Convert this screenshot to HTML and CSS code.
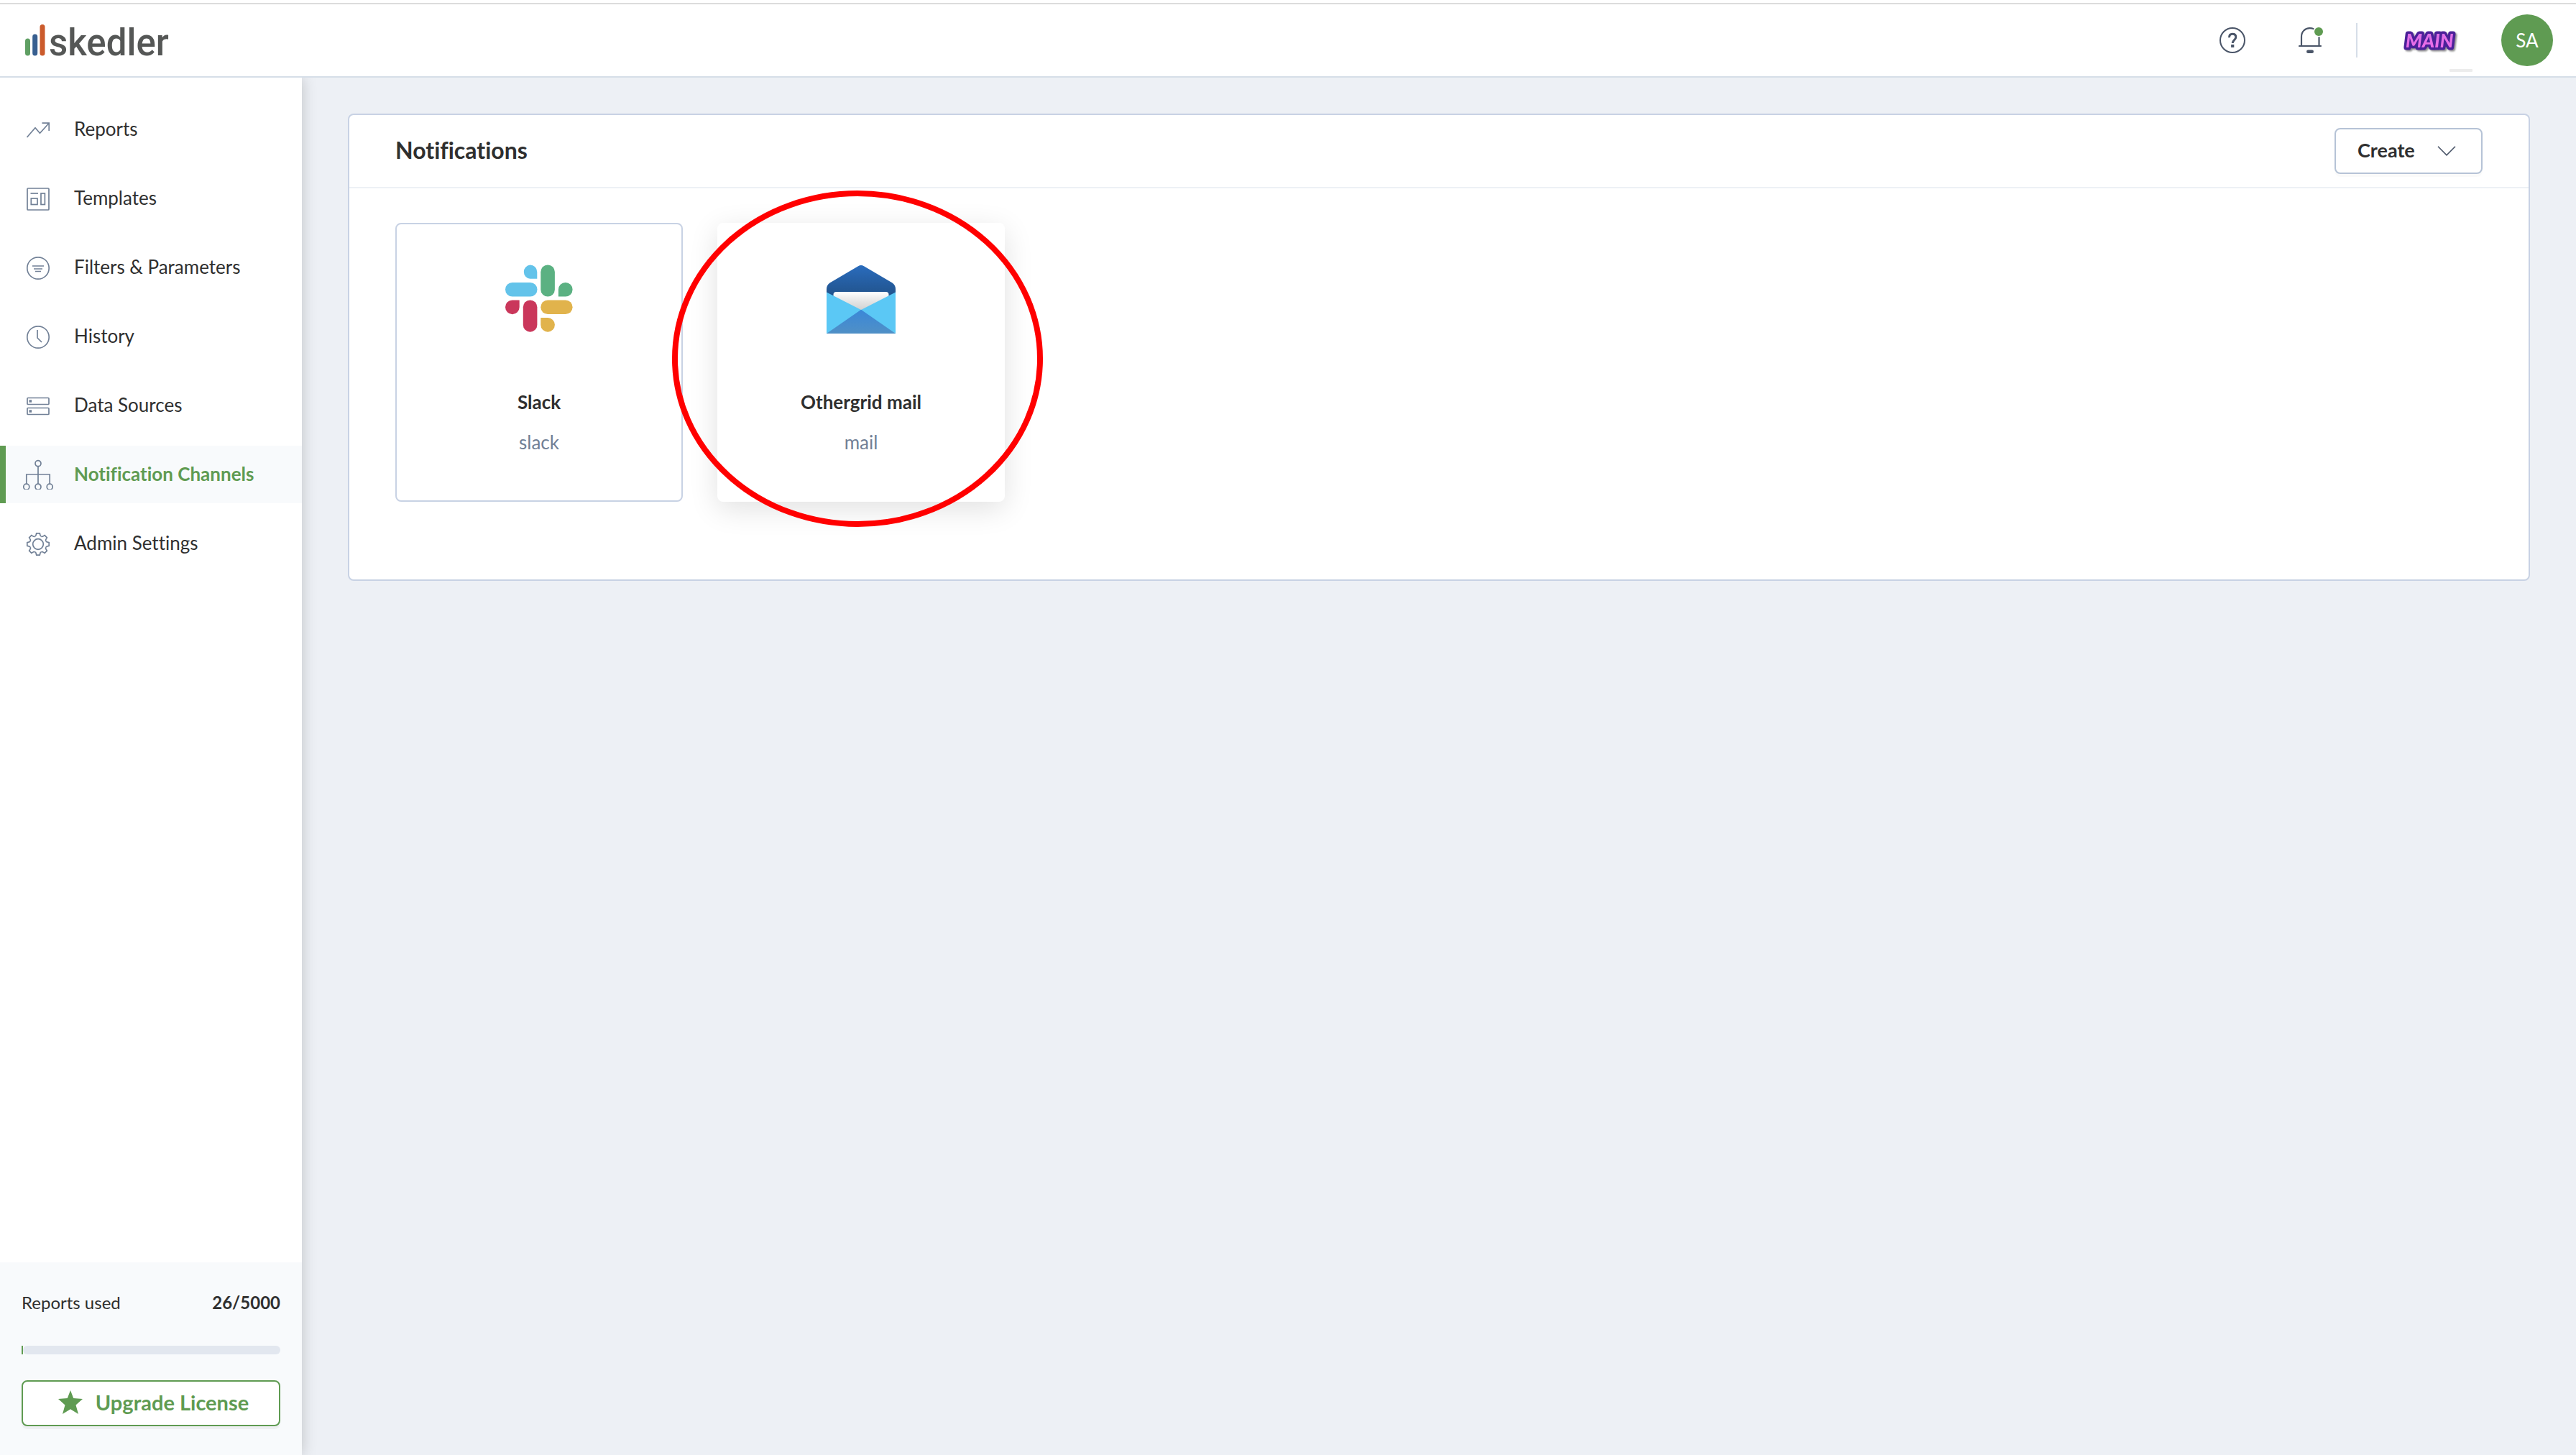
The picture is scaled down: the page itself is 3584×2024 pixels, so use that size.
FILE: index.html
```
<!DOCTYPE html>
<html lang="en">
<head>
<meta charset="utf-8">
<title>Skedler - Notifications</title>
<link rel="stylesheet" href="styles.css">
</head>
<body>
<div class="app">
  <header class="topbar">
    <a class="brand" href="#" aria-label="Skedler">
      <svg class="brand-logo" width="220" height="80" viewBox="34 16 220 80">
        <g stroke-width="7" stroke-linecap="round">
          <path stroke="#5f9f63" d="M38.5 57v17"/>
          <path stroke="#385f90" d="M48.700 51v23"/>
          <path stroke="#cb5b2c" d="M59 37.500v36.500"/>
        </g>
        <text class="wordmark" x="68" y="77">skedler</text>
      </svg>
    </a>
    <div class="tools">
      <button class="icon-button help" type="button" aria-label="Help">
        <svg width="36" height="36" viewBox="0 0 36 36" fill="none" stroke="#4a5568">
          <circle cx="18" cy="18" r="17" stroke-width="2"/>
          <path stroke-width="3" d="M13.500 14.200c0-3 1.800-4.900 4.600-4.900 2.900 0 4.700 1.800 4.700 4.400 0 3.900-4.600 4-4.600 8.300"/>
          <path stroke-width="4.200" d="M18.200 24v4"/>
        </svg>
      </button>
      <button class="icon-button bell" type="button" aria-label="Notifications">
        <svg width="34" height="36" viewBox="0 0 34 36">
          <path fill="none" stroke="#4a5568" stroke-width="2.200" stroke-linecap="round" d="M1 26h30M4 25V13C4 6 9 1.200 15.500 1.200c2 0 3.500.2 5 .9M28.500 14v11"/>
          <rect x="11" y="31.500" width="10" height="4.500" rx="2.200" fill="#4a5568"/>
          <circle cx="28" cy="6" r="6" fill="#5f9b52"/>
        </svg>
      </button>
      <span class="divider"></span>
      <a class="org" href="#" aria-label="Main organization">
        <svg width="96" height="92" viewBox="0 0 96 92">
          <defs>
            <linearGradient id="pink" x1="0" y1="0" x2="0" y2="1">
              <stop offset="0" stop-color="#d873e6"/>
              <stop offset="1" stop-color="#f06aea"/>
            </linearGradient>
          </defs>
          <text class="org-text" x="3" y="56" fill="url(#pink)">MAIN</text>
          <rect x="64" y="86" width="32" height="4" rx="1" fill="#ececec"/>
        </svg>
      </a>
      <button class="avatar" type="button">SA</button>
    </div>
  </header>

  <div class="body">
    <aside class="sidebar">
      <nav class="nav">
        <a class="nav-item" href="#">
          <svg class="nav-icon" viewBox="-21 -22 42 42"><path d="M-15.500 10-4-3.300 2.500 4.200 15-9.500M5.500-9.800h9.700V1"/></svg>
          <span class="label">Reports</span>
        </a>
        <a class="nav-item" href="#">
          <svg class="nav-icon" viewBox="-21 -22 42 42"><rect x="-15" y="-15" width="30" height="30" rx="1"/><path d="M-10.500-8H0"/><rect x="-9.700" y="-1" width="8.700" height="8.500"/><rect x="4" y="-8" width="5.400" height="15.500"/></svg>
          <span class="label">Templates</span>
        </a>
        <a class="nav-item" href="#">
          <svg class="nav-icon" viewBox="-21 -22 42 42"><circle r="15.200"/><path d="M-8-3H8M-6 1H6M-4 4.500H4"/></svg>
          <span class="label">Filters &amp; Parameters</span>
        </a>
        <a class="nav-item" href="#">
          <svg class="nav-icon" viewBox="-21 -22 42 42"><circle r="15.200"/><path d="M-1-10V1L5 7"/></svg>
          <span class="label">History</span>
        </a>
        <a class="nav-item" href="#">
          <svg class="nav-icon" viewBox="-21 -22 42 42"><rect x="-15" y="-11.500" width="30" height="9" rx="1"/><rect x="-15" y="2.500" width="30" height="9" rx="1"/><path stroke-width="3.600" d="M-12.500-7h3.600M-12.500 7h3.600"/></svg>
          <span class="label">Data Sources</span>
        </a>
        <a class="nav-item active" href="#" aria-current="page">
          <svg class="nav-icon" viewBox="-21 -22 42 42"><circle cy="-16.300" r="4"/><circle cx="-16.200" cy="16.200" r="4"/><circle cy="16.200" r="4"/><circle cx="16.200" cy="16.200" r="4"/><path d="M0-12.300V12M-16.200 12V-1H16.200V12"/></svg>
          <span class="label">Notification Channels</span>
        </a>
        <a class="nav-item" href="#">
          <svg class="nav-icon" viewBox="-21 -22 42 42">
            <defs><path id="tooth" d="M-4.500-10.800Q-3-11.300-2.800-13L-2.300-15.200H2.300L2.800-13Q3-11.300 4.500-10.800"/></defs>
            <circle r="7.300"/>
            <use href="#tooth"/><use href="#tooth" transform="rotate(45)"/><use href="#tooth" transform="rotate(90)"/><use href="#tooth" transform="rotate(135)"/><use href="#tooth" transform="rotate(180)"/><use href="#tooth" transform="rotate(225)"/><use href="#tooth" transform="rotate(270)"/><use href="#tooth" transform="rotate(315)"/>
          </svg>
          <span class="label">Admin Settings</span>
        </a>
      </nav>
      <div class="usage">
        <div class="usage-row"><span>Reports used</span><strong>26/5000</strong></div>
        <div class="meter" role="progressbar" aria-label="Reports used" aria-valuemin="0" aria-valuemax="5000" aria-valuenow="26">
          <div class="meter-fill" style="width: 0.52%"></div>
          <div class="meter-rest"></div>
        </div>
        <button class="upgrade" type="button">
          <svg width="34" height="33" viewBox="0 0 34 33"><path fill="#5f9b52" d="M17 0 21.200 11 34 12 24.500 20.500 28 33 17 26.200 6 33 9.500 20.500 0 12 12.800 11z"/></svg>
          <span>Upgrade License</span>
        </button>
      </div>
    </aside>

    <main class="content">
      <section class="panel">
        <div class="panel-head">
          <h1 class="label">Notifications</h1>
          <button class="create" type="button">
            <span class="label">Create</span>
            <svg width="26" height="14" viewBox="0 0 26 14"><path fill="none" stroke="#4a5568" stroke-width="1.600" d="M1 .8 13 12.800 25 .8"/></svg>
          </button>
        </div>
        <div class="cards">
          <article class="card">
            <svg class="card-icon" viewBox="0 1 96 96">
              <g fill="#63c3ea"><path d="M35.500 1.500a9.800 9.800 0 0 1 9.800 9.800v9.500H35.500a9.700 9.700 0 0 1 0-19.300z"/><rect x="1" y="26" width="44.500" height="19.600" rx="9.800"/></g>
              <g fill="#5bb182"><rect x="50.300" y="1.500" width="19.600" height="44" rx="9.800"/><path d="M94.600 35.800a9.800 9.800 0 0 1-9.800 9.800H74.900v-9.800a9.850 9.850 0 0 1 19.700 0z"/></g>
              <g fill="#e1b34c"><rect x="50.300" y="50.500" width="44.300" height="19.600" rx="9.800"/><path d="M50.300 75h9.800a9.850 9.850 0 0 1 0 19.700 9.800 9.800 0 0 1-9.800-9.800z"/></g>
              <g fill="#ca375b"><rect x="25.800" y="50.500" width="19.600" height="44.200" rx="9.800"/><path d="M1 60.300a9.800 9.800 0 0 1 9.800-9.800h9.900v9.800a9.850 9.850 0 0 1-19.700 0z"/></g>
            </svg>
            <h2>Slack</h2>
            <p>slack</p>
          </article>
          <article class="card hovered">
            <svg class="card-icon" viewBox="0 0 96 96">
              <defs>
                <linearGradient id="flap" x1="0" y1="0" x2="0" y2="1"><stop offset="0" stop-color="#2a6cbd"/><stop offset="1" stop-color="#21528a"/></linearGradient>
                <linearGradient id="sheet" x1="0" y1="0" x2="0" y2="1"><stop offset="0" stop-color="#fff"/><stop offset=".35" stop-color="#ececec"/><stop offset="1" stop-color="#d0d0d0"/></linearGradient>
                <linearGradient id="front" x1="0" y1="0" x2="0" y2="1"><stop offset="0" stop-color="#3a87d8"/><stop offset="1" stop-color="#5090c6"/></linearGradient>
              </defs>
              <path fill="url(#flap)" d="M0 45V34c0-3.500 1.500-6.500 4.500-8.500L44 2.200q4-2.400 8 0l39.500 23.300c3 2 4.500 5 4.500 8.500v11z"/>
              <path fill="url(#sheet)" d="M9.500 60V42q0-4 4-4h69q4 0 4 4v18L48 64z"/>
              <path fill="#5bc8f5" d="M0 38.500 48 63 96 38.500V96H0z"/>
              <path fill="url(#front)" d="M48 62.700 96 96H0z"/>
            </svg>
            <h2>Othergrid mail</h2>
            <p>mail</p>
            <svg class="marker" width="516" height="468" viewBox="0 0 516 468"><ellipse cx="258" cy="234" rx="254" ry="230" fill="none" stroke="#f00" stroke-width="8"/></svg>
          </article>
        </div>
      </section>
    </main>
  </div>
</div>
</body>
</html>
```
FILE: styles.css
```
* { box-sizing: border-box; }

body {
  margin: 0;
  font-family: Lato, "Open Sans", sans-serif;
  font-size: 26px;
  line-height: 32px;
  font-variant-ligatures: none;
  color: #2f2f2f;
  background: #edf0f5;
}

button { font: inherit; font-variant-ligatures: none; color: inherit; cursor: pointer; }
a { color: inherit; text-decoration: none; }
svg { display: block; flex: none; }
h1, h2, p { margin: 0; }

.app {
  min-height: 100vh;
  display: flex;
  flex-direction: column;
  padding-top: 4px;
  background: #fff;
}

/* Top bar */
.topbar {
  position: relative;
  z-index: 1;
  display: flex;
  align-items: center;
  justify-content: space-between;
  height: 104px;
  padding: 0 32px 0 34px;
  background: #fff;
  border-top: 2px solid #dcdcdc;
  border-bottom: 2px solid #d6dee8;
}

.wordmark {
  font-family: Roboto, "Liberation Sans", sans-serif;
  font-size: 51px;
  font-weight: 500;
  fill: #555756;
}

.tools { display: flex; align-items: center; }

.icon-button { padding: 0; border: 0; background: none; }
.help { margin-right: 74px; }
.bell { margin-right: 46px; }

.divider {
  width: 2px;
  height: 48px;
  margin-right: 64px;
  background: #d6dee8;
}

.org { margin-right: 40px; }
.org-text {
  font-family: Lato, "Liberation Sans", sans-serif;
  font-size: 26px;
  font-weight: 900;
  font-style: italic;
  stroke: #4b2199;
  stroke-width: 7px;
  stroke-linejoin: round;
  paint-order: stroke;
  filter: drop-shadow(2px 2px 1px rgba(0, 0, 0, .45));
}

.avatar {
  width: 72px;
  height: 72px;
  padding: 0;
  border: 0;
  border-radius: 50%;
  color: #fff;
  background: #5f9b52;
}

/* Layout */
.body { flex: 1; display: flex; background: #edf0f5; }

.sidebar {
  flex: none;
  width: 420px;
  display: flex;
  flex-direction: column;
  justify-content: space-between;
  background: #fff;
  box-shadow: 0 0 20px rgba(0, 0, 0, .2);
}

.label { padding-bottom: 2px; }

.nav {
  display: flex;
  flex-direction: column;
  gap: 16px;
  padding-top: 32px;
}
.nav-item {
  display: flex;
  align-items: center;
  gap: 29px;
  height: 80px;
  padding-left: 24px;
  border-left: 8px solid transparent;
}
.nav-item.active {
  color: #5f9b52;
  font-weight: 700;
  background: #f8fafc;
  border-left-color: #5f9b52;
}
.nav-icon {
  width: 42px;
  height: 42px;
  fill: none;
  stroke: #718096;
  stroke-width: 1.700px;
}

.usage {
  padding: 42px 30px 40px;
  background: #f8fafc;
}
.usage-row {
  display: flex;
  justify-content: space-between;
  font-size: 24px;
  line-height: 28px;
}
.meter {
  display: flex;
  height: 12px;
  margin: 46px 0 36px;
}
.meter-fill { background: #5f9b52; }
.meter-rest { flex: 1; border-radius: 6px; background: #e2e7ef; }

.upgrade {
  display: flex;
  align-items: center;
  justify-content: center;
  gap: 18px;
  width: 100%;
  height: 64px;
  padding: 0 0 3px 7px;
  font-size: 29px;
  font-weight: 700;
  color: #5f9b52;
  background: #fff;
  border: 2px solid #5f9b52;
  border-radius: 8px;
  box-shadow: 0 4px 0 rgba(0, 0, 0, .04);
}

/* Main content */
.content { flex: 1; padding: 50px 64px; }

.panel {
  background: #fff;
  border: 2px solid #c8d2e4;
  border-radius: 8px;
}
.panel-head {
  display: flex;
  align-items: center;
  justify-content: space-between;
  height: 102px;
  padding: 0 64px;
  border-bottom: 2px solid #edf1f5;
}
.panel-head h1 { font-size: 32px; line-height: 40px; }

.create {
  display: flex;
  align-items: center;
  justify-content: space-between;
  width: 206px;
  height: 64px;
  padding: 0 35px 0 30px;
  font-size: 27px;
  font-weight: 700;
  background: #fff;
  border: 2px solid #b6c3d6;
  border-radius: 8px;
  box-shadow: 0 4px 0 rgba(0, 0, 0, .02);
}

.cards {
  display: flex;
  flex-wrap: wrap;
  gap: 48px;
  padding: 48px 64px 108px;
}
.card {
  position: relative;
  display: flex;
  flex-direction: column;
  align-items: center;
  width: 400px;
  height: 388px;
  padding-top: 56px;
  background: #fff;
  border: 2px solid #c8d2e4;
  border-radius: 8px;
}
.card.hovered {
  border-color: transparent;
  box-shadow: 0 10px 40px rgba(0, 0, 0, .12);
}
.card-icon { width: 96px; height: 96px; margin-bottom: 79px; }
.card h2 { font-size: 26px; line-height: 32px; font-weight: 700; margin-bottom: 24px; }
.card p { color: #718096; }

.marker {
  position: absolute;
  top: -47px;
  left: -65px;
  pointer-events: none;
}
```
